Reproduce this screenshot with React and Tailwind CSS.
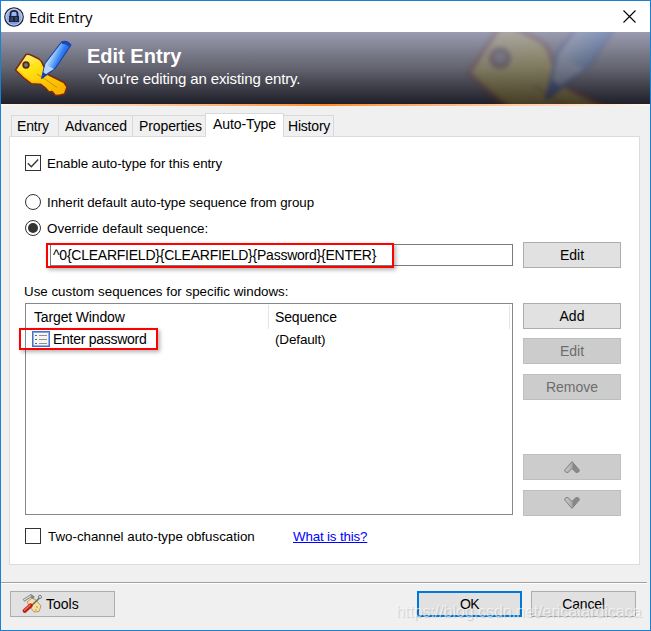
import React from 'react'

const tabs = [
  { label: 'Entry', tab: 'w-[48px] pl-[5px] tracking-[-0.2px]' },
  { label: 'Advanced', tab: 'w-[74px] pl-[6px] tracking-[-0.05px]' },
  { label: 'Properties', tab: 'w-[73px] pl-[6px] tracking-[-0.1px]' },
  { label: 'Auto-Type', active: true, tab: 'w-[79px] pl-[7px] tracking-[-0.1px]' },
  { label: 'History', tab: 'w-[50px] pl-[4px] tracking-[-0.2px]' },
]

const KeyPencil = ({ id, className, viewBox }) => (
  <svg className={className} viewBox={viewBox}>
    <defs>
      <linearGradient id={`${id}-gold`} x1="0" y1="0" x2="0.6" y2="1">
        <stop offset="0" stopColor="#fff0a0" />
        <stop offset="0.4" stopColor="#ffe312" />
        <stop offset="1" stopColor="#fbb400" />
      </linearGradient>
      <linearGradient id={`${id}-blue`} x1="0" y1="0" x2="1" y2="0.6">
        <stop offset="0" stopColor="#4c96ff" />
        <stop offset="0.4" stopColor="#b5dcff" />
        <stop offset="0.65" stopColor="#2f7df2" />
        <stop offset="1" stopColor="#0c3fc4" />
      </linearGradient>
    </defs>
    <path
      d="M12 15.5 Q14 14.5 18 16.5 L25 20 Q28.5 22.5 29.5 27 L34 35.5 L50 43.5 L53 48 L50.5 55 L46 56 L41.5 56.5 L38 52.5 L35 53 L31 48.5 L26.5 45.2 L17.6 44.8 Q9 39 1.5 31 Z"
      fill={`url(#${id}-gold)`}
      stroke="#7a2a12"
      strokeWidth="1.5"
      strokeLinejoin="round"
    />
    <circle cx="12" cy="26" r="2.8" fill="#77777f" stroke="#5c2412" strokeWidth="1.8" />
    <path d="M23 35 L33 41.5 L43 48.5" fill="none" stroke="#cf8a00" strokeWidth="0.9" />
    <path d="M3.5 31 Q10 38 18 43.2 L27 43.6" stroke="#ffb900" strokeWidth="1.2" fill="none" />
    <path d="M27.6 39.5 L31 24.5 L47.5 3 Q53 1 57 6 L41.5 29 Z" fill={`url(#${id}-blue)`} stroke="#1b3fa4" strokeWidth="1.1" strokeLinejoin="round" />
    <path d="M28.6 36.5 L31.5 25.5 L40 30 Z" fill="#b9d3f8" />
    <path d="M27.6 39.5 L29 33 L33 36 Z" fill="#153fae" />
    <path d="M47.8 4 Q52.5 3 56 6.8" stroke="#1d46b8" strokeWidth="2.6" fill="none" />
  </svg>
)

const LockIcon = () => (
  <svg className="w-5 h-5" viewBox="0 0 20 20">
    <defs>
      <linearGradient id="lock-bg" x1="0" y1="0" x2="0" y2="1">
        <stop offset="0" stopColor="#b4c6f6" />
        <stop offset="1" stopColor="#6f92e6" />
      </linearGradient>
    </defs>
    <circle cx="10" cy="10" r="9.2" fill="url(#lock-bg)" stroke="#20242e" strokeWidth="1.3" />
    <circle cx="10" cy="10" r="8.1" fill="none" stroke="#c9d5f5" strokeWidth="0.8" />
    <path d="M6.5 9.5 V7 Q6.5 3.8 10 3.8 Q13.5 3.8 13.5 7 V9.5" fill="none" stroke="#1b2439" strokeWidth="1.8" />
    <rect x="5" y="9" width="10" height="6" fill="#1b2439" />
    <path d="M6.5 11 H13.5 M6.5 13 H13.5" stroke="#7f96d0" strokeWidth="0.6" />
    <rect x="9.4" y="10" width="1.2" height="4" fill="#0c1222" />
  </svg>
)

const ToolsIcon = () => (
  <svg className="w-5 h-5" viewBox="0 0 20 20">
    <path d="M5 8 L10 4 L14 6 L19 12 L17 17.5 L12 18 L8 13 Z" fill="#f7dfa0" stroke="#a98752" strokeWidth="0.8" />
    <path d="M1.5 6.5 L9 1.8 L12 4" fill="none" stroke="#858585" strokeWidth="2.8" />
    <path d="M2 6 L9 1.8" fill="none" stroke="#dde0e0" strokeWidth="1.2" />
    <path d="M8 13 L17.5 4" stroke="#5f6870" strokeWidth="1.6" />
    <circle cx="18" cy="2.9" r="1.6" fill="#d6e0ea" stroke="#5f6870" strokeWidth="0.8" />
    <path d="M2.8 16.8 L8.5 11.6" stroke="#b01c18" strokeWidth="4.2" strokeLinecap="round" />
    <path d="M2.6 16.2 L8 11.2" stroke="#f4604c" strokeWidth="1.8" strokeLinecap="round" />
    <circle cx="15" cy="13" r="0.8" fill="#a98752" />
    <circle cx="14" cy="16" r="0.7" fill="#a98752" />
  </svg>
)

const ListIcon = () => (
  <svg className="w-[18px] h-4" viewBox="0 0 18 16">
    <rect x="0.75" y="0.75" width="16.5" height="14.5" fill="#f5f5f3" stroke="#4471c9" strokeWidth="1.5" />
    <path d="M1 1.5 H17" stroke="#7fa4e8" strokeWidth="1" />
    <path d="M3 4.5 H5 M3 8.5 H5 M3 12.5 H5" stroke="#666" strokeWidth="1.2" />
    <path d="M7 4.5 H15 M7 8.5 H15 M7 12.5 H15" stroke="#909090" strokeWidth="1.2" />
  </svg>
)

const Chevron = ({ down }) => (
  <svg className={down ? 'w-4 h-3 rotate-180' : 'w-4 h-3'} viewBox="0 0 16 12">
    <defs>
      <linearGradient id={down ? 'chev-down' : 'chev-up'} x1={down ? '1' : '0'} x2={down ? '0' : '1'}>
        <stop offset="0" stopColor="#c8c8c8" />
        <stop offset="0.45" stopColor="#b0b0b0" />
        <stop offset="0.6" stopColor="#868686" />
        <stop offset="1" stopColor="#8c8c8c" />
      </linearGradient>
    </defs>
    <path
      d="M8 0.6 L15.3 9 Q15.5 11.4 13 11.4 H12 L8 7.6 L4 11.4 H3 Q0.5 11.4 0.7 9 Z"
      fill={down ? 'url(#chev-down)' : 'url(#chev-up)'}
      stroke="#808080"
      strokeWidth="1"
      strokeLinejoin="round"
    />
  </svg>
)

const Button = ({ children, disabled, className = '' }) => (
  <button
    className={`flex h-[26px] items-center justify-center border ${
      disabled ? 'border-[#bfbfbf] bg-[#cccccc] text-[#6d6d6d]' : 'border-[#adadad] bg-[#e1e1e1]'
    } ${className}`}
  >
    {children}
  </button>
)

const Checkbox = ({ checked }) => (
  <span className="flex h-4 w-4 items-center justify-center border border-[#333333] bg-white">
    {checked && (
      <svg className="w-[14px] h-[14px]" viewBox="0 0 14 14">
        <path d="M1.8 7.2 L5.3 10.7 L12.2 3.5" fill="none" stroke="#333" strokeWidth="1.3" />
      </svg>
    )}
  </span>
)

const Radio = ({ checked }) => (
  <span className="flex h-4 w-4 items-center justify-center rounded-full border border-[#333333] bg-white">
    {checked && <span className="h-[10px] w-[10px] rounded-full bg-[#333333]"></span>}
  </span>
)

const App = () => {
  return (
    <div className="relative flex h-[631px] w-[651px] flex-col overflow-hidden border border-[#1a80d2] bg-[#f0f0f0] font-['Liberation_Sans',Arial,sans-serif] text-[14px] leading-4 text-black">
      {/* Title bar */}
      <div className="flex h-[31px] shrink-0 items-center bg-white pl-[3px] pr-[14px]">
        <LockIcon />
        <span className="ml-[5px] font-['Open_Sans',sans-serif] text-[15px] tracking-[-0.4px]">Edit Entry</span>
        <svg className="ml-auto h-[13px] w-[13px]" viewBox="0 0 13 13">
          <path d="M0.5 0.5 L12.5 12.5 M12.5 0.5 L0.5 12.5" stroke="#000" strokeWidth="1.1" />
        </svg>
      </div>

      {/* Banner */}
      <div className="relative flex h-[72px] shrink-0 overflow-hidden bg-linear-to-b from-[#9a9bb0] via-[#63646f] to-[#20202a] pl-[13px] text-white">
        <KeyPencil id="banner" viewBox="0 0 58 58" className="mt-[7px] h-[58px] w-[58px]" />
        <div className="ml-[15px] pt-[13px]">
          <div className="text-[20px] leading-[22px] font-bold">Edit Entry</div>
          <div className="ml-[11px] mt-[4px] text-[15px] leading-4 tracking-[-0.12px]">You're editing an existing entry.</div>
        </div>
        <div className="absolute left-[463px] top-[-52px] opacity-[0.17]">
          <KeyPencil id="ghost" viewBox="0 0 58 58" className="h-[174px] w-[174px] blur-[2px]" />
        </div>
      </div>
      <div className="h-[2px] shrink-0 bg-linear-to-r from-[#fff5ec] via-[#ff8c20] to-[#fff5ec]"></div>

      {/* Tabs */}
      <div className="mt-[7px] flex h-[23px] shrink-0 items-end pl-[10px]">
        {tabs.map(({ label, active, tab }) => (
          <div
            key={label}
            className={`${tab} border-t border-r border-[#d9d9d9] whitespace-nowrap first:border-l ${
              active
                ? 'relative z-10 -mb-px -ml-px h-[24px] border-l bg-white pt-[2px]'
                : 'h-[21px] bg-[#f0f0f0] pt-[2px]'
            }`}
          >
            {label}
          </div>
        ))}
      </div>

      {/* Auto-Type page */}
      <div className="ml-[8px] h-[429px] w-[631px] shrink-0 border border-[#dcdcdc] bg-white pl-[15px] pt-[18px]">
        <label className="flex h-4 items-center gap-[6px]">
          <Checkbox checked />
          <span className="pt-[2px] text-[13.33px] tracking-[-0.09px]">Enable auto-type for this entry</span>
        </label>
        <label className="mt-[23px] flex h-4 items-center gap-[6px]">
          <Radio />
          <span className="pt-[2px] text-[13.33px] tracking-[-0.06px]">Inherit default auto-type sequence from group</span>
        </label>
        <label className="mt-[10px] flex h-4 items-center gap-[6px]">
          <Radio checked />
          <span className="pt-[2px] text-[13.33px] tracking-[0.05px]">Override default sequence:</span>
        </label>

        <div className="mt-[6px] flex h-[26px] items-center">
          <div className="relative ml-[25px] flex h-[22px] w-[463px] items-center border border-[#7a7a7a] pl-[2px]">
            <span className="tracking-[-0.24px]">^0{'{CLEARFIELD}{CLEARFIELD}{Password}{ENTER}'}</span>
            <div className="absolute -left-[5px] -top-[2px] h-[25px] w-[348px] border-2 border-[#fe0000] shadow-[2px_2px_4px_rgba(0,0,0,0.3)]"></div>
          </div>
          <Button className="ml-[10px] w-[98px]">Edit</Button>
        </div>

        <div className="-ml-px mt-[16px] h-4 text-[13.33px]">Use custom sequences for specific windows:</div>

        <div className="mt-[3px] flex">
          <div className="relative h-[212px] w-[488px] border border-[#828790]">
            <div className="mt-px flex h-6">
              <div className="flex w-[243px] items-center border-r border-[#e5e5e5] pl-[8px] tracking-[-0.15px]">Target Window</div>
              <div className="flex w-[241px] items-center border-r border-[#e5e5e5] pl-[6px] tracking-[-0.15px]">Sequence</div>
            </div>
            <div className="flex h-[20px] items-center">
              <div className="flex w-[243px] items-center gap-[3px] pl-[6px]">
                <ListIcon />
                <span className="tracking-[-0.27px]">Enter password</span>
              </div>
              <div className="pl-[6px] pt-px text-[13.5px] tracking-[-0.15px]">(Default)</div>
            </div>
            <div className="absolute -left-[7px] top-[24px] h-[22px] w-[139px] border-2 border-[#fe0000] shadow-[2px_2px_4px_rgba(0,0,0,0.3)]"></div>
          </div>
          <div className="ml-[10px] flex w-[98px] flex-col">
            <Button>Add</Button>
            <Button disabled className="mt-[9px]">Edit</Button>
            <Button disabled className="mt-[10px]">Remove</Button>
            <Button disabled className="mt-[54px]"><Chevron /></Button>
            <Button disabled className="mt-[10px]"><Chevron down /></Button>
          </div>
        </div>

        <div className="mt-[12px] flex h-4 items-center text-[13.33px]">
          <Checkbox />
          <span className="ml-[7px] w-[245px] pt-[2px]">Two-channel auto-type obfuscation</span>
          <a className="pt-[2px] tracking-[-0.15px] text-[#0000ff] underline">What is this?</a>
        </div>
      </div>

      {/* Footer */}
      <div className="mr-[3px] mt-[17px] h-[2px] shrink-0 border-t border-[#a0a0a0] bg-white"></div>
      <div className="mt-[7px] flex pl-[9px]">
        <button className="flex h-[26px] w-[105px] items-center gap-[4px] border border-[#adadad] bg-[#e1e1e1] pl-[11px]">
          <ToolsIcon />
          <span>Tools</span>
        </button>
        <button className="ml-[302px] h-[26px] w-[105px] border-2 border-[#0078d7] bg-[#e1e1e1] tracking-[-0.7px]">OK</button>
        <Button className="ml-[9px] w-[105px] tracking-[-0.2px]">Cancel</Button>
      </div>
      <div className="absolute left-[395px] top-[602px] text-[16px] leading-[18px] tracking-[-0.05px] whitespace-nowrap text-white/60 [text-shadow:1px_1px_1px_rgba(0,0,0,0.15)]">
        https://blog.csdn.net/ericatardicaca
      </div>
    </div>
  )
}

export default App
